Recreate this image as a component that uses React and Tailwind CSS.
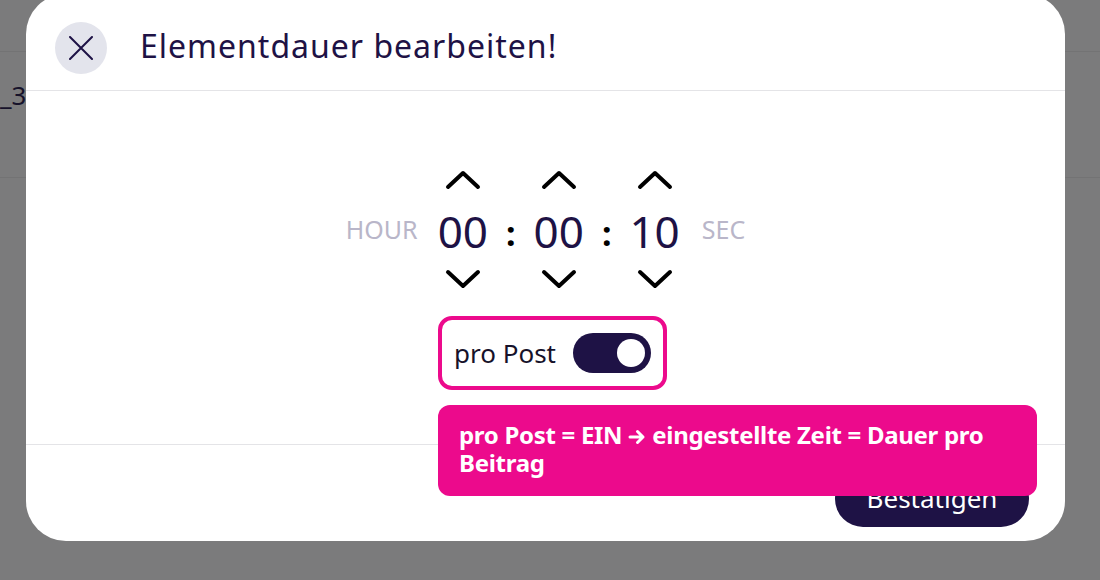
import { useState } from "react";

function Chevron({ up }) {
  return (
    <svg width="38" height="22" viewBox="0 0 38 22" fill="none" className="block">
      <polyline
        points={up ? "4,18 19,4 34,18" : "4,4 19,18 34,4"}
        stroke="#000"
        strokeWidth="4"
        strokeLinecap="round"
        strokeLinejoin="round"
      />
    </svg>
  );
}

function Unit({ value }) {
  return (
    <div className="flex flex-col items-center">
      <Chevron up />
      <div className="text-[44px] leading-[56px] mt-[12px] mb-[9px] text-[#1e1245]">{value}</div>
      <Chevron />
    </div>
  );
}

export default function App() {
  const [perPost, setPerPost] = useState(true);

  return (
    <div
      className="relative w-[1100px] h-[580px] overflow-hidden bg-[#7b7b7c]"
      style={{ fontFamily: '"Noto Sans", sans-serif' }}
    >
      {/* page behind the overlay */}
      <div className="h-[52px] border-b border-[#737374]" />
      <div className="h-[126px] border-b border-[#737374] pt-[28px] text-[26px] leading-[30px] text-[#16122a]">_3</div>

      {/* dialog */}
      <div className="absolute left-[26px] top-[-6px] w-[1039px] h-[547px] bg-white rounded-[40px] flex flex-col">
        <div className="h-[97px] flex items-center gap-[33px] px-[29px] pt-[12px] border-b border-[#e4e4e7]">
          <button className="w-[52px] h-[52px] rounded-full bg-[#e3e4ec] flex items-center justify-center">
            <svg width="24" height="24" viewBox="0 0 24 24" fill="none">
              <path d="M1 1L23 23M23 1L1 23" stroke="#1e1245" strokeWidth="2" strokeLinecap="round" />
            </svg>
          </button>
          <h1 className="text-[32px] text-[#1e1245] tracking-[1px] mt-[-4px]">Elementdauer bearbeiten!</h1>
        </div>

        <div className="h-[354px] flex flex-col items-center pt-[78px] border-b border-[#e4e4e7]">
          <div className="flex items-center">
            <span className="text-[25px] text-[#b9b6c9] mr-[20px]">HOUR</span>
            <Unit value="00" />
            <span className="text-[34px] font-bold text-black mx-[18px] mt-[8px]">:</span>
            <Unit value="00" />
            <span className="text-[34px] font-bold text-black mx-[18px] mt-[8px]">:</span>
            <Unit value="10" />
            <span className="text-[25px] text-[#b9b6c9] ml-[22px]">SEC</span>
          </div>

          <div className="relative mt-[26px] ml-[14px]">
            <div className="w-[229px] h-[74px] border-[4px] border-[#ec0a8c] rounded-[14px] flex items-center pl-[12px] gap-[17px]">
              <span className="text-[26px] text-[#16122a]">pro Post</span>
              <button
                onClick={() => setPerPost(!perPost)}
                className="w-[78px] h-[40px] rounded-full bg-[#1e1245] flex items-center justify-end px-[6px]"
              >
                <span className="w-[28px] h-[28px] rounded-full bg-white block" />
              </button>
            </div>
            <div className="absolute left-0 top-[89px] w-[599px] bg-[#ec0a8c] rounded-[12px] px-[21px] pt-[16px] pb-[19px] z-10">
              <p className="text-[24px] leading-[28px] font-bold text-white tracking-[-0.3px]">
                pro Post = EIN{" "}
                <svg width="18" height="16" viewBox="0 0 18 16" fill="none" className="inline-block align-[-1px]">
                  <path d="M2 8H15M9.5 2.5L15 8L9.5 13.5" stroke="#fff" strokeWidth="3" strokeLinecap="round" strokeLinejoin="round" />
                </svg>{" "}
                eingestellte Zeit = Dauer pro Beitrag
              </p>
            </div>
          </div>
        </div>

        <div className="flex-1 flex items-center justify-end pr-[36px] pt-[10px]">
          <button className="w-[194px] h-[57px] rounded-[28px] bg-[#1e1245] text-white text-[26px]">
            Bestätigen
          </button>
        </div>
      </div>
    </div>
  );
}
